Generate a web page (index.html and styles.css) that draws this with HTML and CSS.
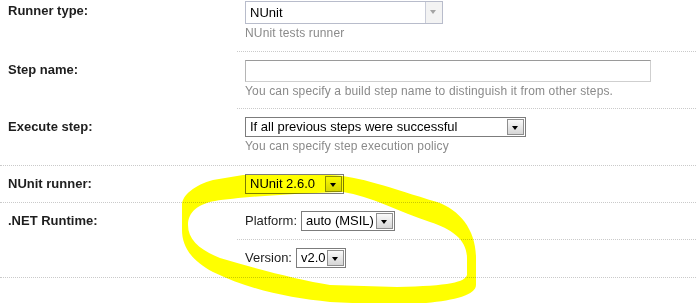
FILE: index.html
```html
<!DOCTYPE html>
<html lang="en">
<head>
    <meta charset="UTF-8">
    <title>Build step: NUnit</title>
    <link rel="stylesheet" href="styles.css">
</head>
<body>
    <div class="settings">
        <div class="row row-runner">
            <div class="label">Runner type:</div>
            <div class="field sep">
                <div class="select select-disabled" style="width: 198px; height: 23px;">
                    <span class="value">NUnit</span>
                    <span class="arrow"></span>
                </div>
                <div class="hint">NUnit tests runner</div>
            </div>
        </div>

        <div class="row row-step">
            <div class="label">Step name:</div>
            <div class="field sep">
                <div class="text-input"></div>
                <div class="hint">You can specify a build step name to distinguish it from other steps.</div>
            </div>
        </div>

        <div class="row row-step sep">
            <div class="label">Execute step:</div>
            <div class="field">
                <div class="select" style="width: 281px;">
                    <span class="value">If all previous steps were successful</span>
                    <span class="arrow"></span>
                </div>
                <div class="hint">You can specify step execution policy</div>
            </div>
        </div>

        <div class="row row-short sep">
            <div class="label">NUnit runner:</div>
            <div class="field">
                <div class="select" style="width: 99px;">
                    <span class="value">NUnit 2.6.0</span>
                    <span class="arrow"></span>
                </div>
            </div>
        </div>

        <div class="row sep">
            <div class="label">.NET Runtime:</div>
            <div class="field-group">
                <div class="field inline sep">
                    <span class="inline-label">Platform:</span>
                    <div class="select" style="width: 94px;">
                        <span class="value">auto (MSIL)</span>
                        <span class="arrow"></span>
                    </div>
                </div>
                <div class="field inline">
                    <span class="inline-label">Version:</span>
                    <div class="select" style="width: 50px;">
                        <span class="value">v2.0</span>
                        <span class="arrow"></span>
                    </div>
                </div>
            </div>
        </div>
    </div>

    <!-- highlighter scribble on top of the form -->
    <svg class="marker" width="696" height="303" viewBox="0 0 696 303">
        <path fill="#ffff00" fill-rule="evenodd" d="
            M 182 205
            C 182 195, 195 185, 213 180
            L 243 175 L 330 175
            C 360 176, 390 188, 437 202
            C 460 210, 476 230, 476 258
            L 476 285
            C 476 298, 440 303, 397 305
            L 330 302
            C 290 298, 250 290, 213 272
            C 190 260, 182 245, 182 230 Z
            M 188 225
            C 188 212, 198 204, 215 201
            C 240 197, 300 193, 343 192
            C 370 196, 400 212, 430 222
            C 452 229, 467 240, 467 258
            L 467 275
            C 465 282, 450 286, 397 287
            L 330 285
            C 300 280, 260 270, 220 258
            C 200 250, 188 240, 188 225 Z"/>
    </svg>
</body>
</html>
```

FILE: styles.css
```css
* {
    margin: 0;
    padding: 0;
    box-sizing: border-box;
}

body {
    font-family: "Liberation Sans", Arial, sans-serif;
    font-size: 13px;
    color: #1e1e1e;
    background: #fff;
    position: relative;
    width: 696px;
    height: 303px;
    overflow: hidden;
}

.settings {
    margin-top: -7px;
}

.row {
    display: grid;
    grid-template-columns: 237px 1fr;
}

.sep {
    border-bottom: 1px dotted #cacaca;
}

.label {
    font-weight: bold;
    line-height: 16px;
    padding: 10px 8px 0 8px;
}

.field {
    padding: 8px 8px 0 8px;
}

.row-runner {
    height: 59px;
}

.row-step {
    height: 57px;
}

.row-short {
    height: 37px;
}

.field-group .field {
    height: 37px;
}

.inline {
    display: flex;
    align-items: flex-start;
    gap: 4px;
}

.inline-label {
    line-height: 20px;
}

.hint {
    font-size: 12px;
    line-height: 15px;
    letter-spacing: 0.15px;
    color: #8a8a8a;
    margin-top: 2px;
}

.select {
    display: flex;
    height: 20px;
    border: 1px solid #7c7c7c;
    background: #fff;
    color: #000;
}

.select .value {
    flex: 1;
    padding-left: 4px;
    line-height: 18px;
    white-space: nowrap;
    overflow: hidden;
}

.select .arrow {
    width: 17px;
    margin: 1px;
    border: 1px solid #8e8e8e;
    background: linear-gradient(#fafafa, #d6d6d6);
    position: relative;
}

.select .arrow:after {
    content: "";
    position: absolute;
    left: 4px;
    top: 6px;
    border-left: 3.5px solid transparent;
    border-right: 3.5px solid transparent;
    border-top: 4px solid #000;
}

.select-disabled {
    border-color: #b8bccb;
}

.select-disabled .value {
    line-height: 21px;
}

.select-disabled .arrow {
    width: 17px;
    margin: 0;
    border: none;
    border-left: 1px solid #c9ccd8;
    background: #f3f3f3;
}

.select-disabled .arrow:after {
    top: 8px;
    border-top-color: #a4a4a4;
}

.text-input {
    width: 406px;
    height: 22px;
    border: 1px solid #cfcfcf;
    border-top-color: #9a9a9a;
    border-left-color: #b5b5b5;
}

.marker {
    position: absolute;
    top: 0;
    left: 0;
    mix-blend-mode: multiply;
    pointer-events: none;
}
```
